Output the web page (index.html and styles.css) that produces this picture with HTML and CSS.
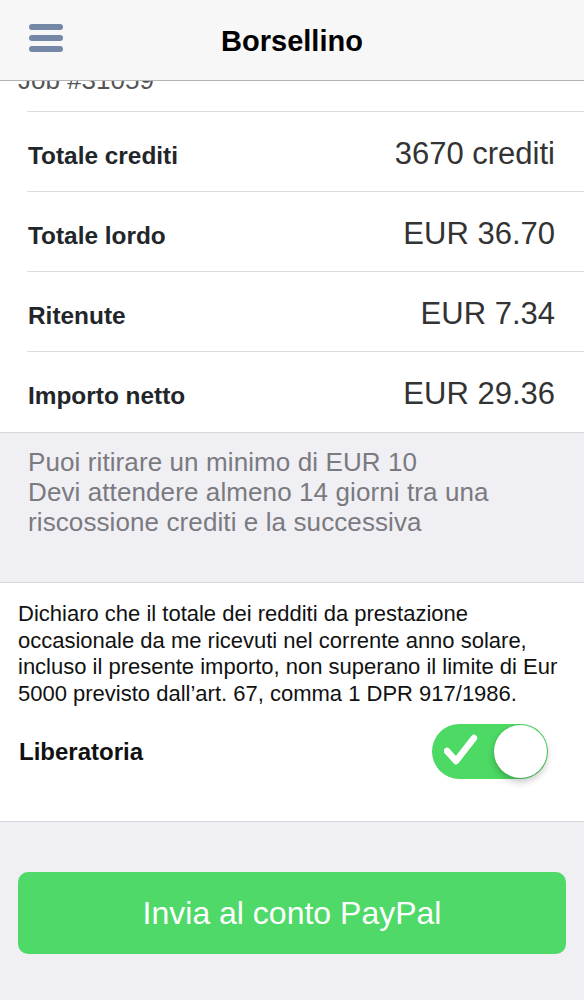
FILE: index.html
```html
<!DOCTYPE html>
<html lang="it">
<head>
<meta charset="utf-8">
<title>Borsellino</title>
<link rel="stylesheet" href="styles.css">
</head>
<body>
<header class="navbar">
  <div class="nav-left">
    <div class="hamburger"><span></span><span></span><span></span></div>
  </div>
  <h1 class="nav-title">Borsellino</h1>
  <div class="nav-right"></div>
</header>

<main class="page">
  <div class="job">Job #31059</div>

  <div class="rows">
    <div class="row"><span class="label">Totale crediti</span><span class="value">3670 crediti</span></div>
    <div class="row"><span class="label">Totale lordo</span><span class="value">EUR 36.70</span></div>
    <div class="row"><span class="label">Ritenute</span><span class="value">EUR 7.34</span></div>
    <div class="row"><span class="label">Importo netto</span><span class="value">EUR 29.36</span></div>
  </div>

  <section class="note">
    <p>Puoi ritirare un minimo di EUR 10<br>Devi attendere almeno 14 giorni tra una riscossione crediti e la successiva</p>
  </section>

  <section class="declaration">
    <p class="decl-text">Dichiaro che il totale dei redditi da prestazione occasionale da me ricevuti nel corrente anno solare, incluso il presente importo, non superano il limite di Eur 5000 previsto dall’art. 67, comma 1 DPR 917/1986.</p>
    <div class="switch-row">
      <span class="switch-label">Liberatoria</span>
      <div class="switch">
        <svg class="check" width="34" height="32" viewBox="0 0 34 32"><polyline points="3,17 12,27 30,4" fill="none" stroke="#fff" stroke-width="6.5" stroke-linecap="round" stroke-linejoin="round"/></svg>
        <span class="knob"></span>
      </div>
    </div>
  </section>

  <section class="actions">
    <button class="btn-primary">Invia al conto PayPal</button>
  </section>
</main>
</body>
</html>
```

FILE: styles.css
```css
* { box-sizing: border-box; }
html, body { margin: 0; padding: 0; }
body {
  background: #ffffff;
  font-family: "Liberation Sans", Arial, Helvetica, sans-serif;
  color: #222;
  width: 584px;
  height: 1000px;
  overflow: hidden;
  position: relative;
}

.navbar {
  position: absolute;
  top: 0; left: 0; right: 0;
  height: 81px;
  background: #f7f7f7;
  border-bottom: 1px solid #b4b4b4;
  display: grid;
  grid-template-columns: 1fr auto 1fr;
  z-index: 2;
}
.nav-left { align-self: start; padding: 24px 0 0 29px; }
.hamburger { display: flex; flex-direction: column; gap: 5px; width: 34px; }
.hamburger span { display: block; height: 6px; border-radius: 3px; background: #7487a7; }
.nav-title {
  margin: 0;
  align-self: center;
  padding-top: 3px;
  font-size: 29px;
  font-weight: 700;
  color: #000;
  line-height: 1;
}

.page { display: flex; flex-direction: column; }

.job {
  height: 111px;
  padding: 65px 0 0 18px;
  font-size: 26px;
  line-height: 30px;
  color: #555;
}

.rows { display: flex; flex-direction: column; }
.row {
  margin-left: 27px;
  height: 80px;
  border-top: 1px solid #dcdcdc;
  padding: 27px 29px 0 1px;
  display: flex;
  align-items: baseline;
  justify-content: space-between;
}
.row:last-child { height: 81px; }
.label { font-size: 24.4px; font-weight: 700; line-height: 30px; color: #22262a; }
.value { font-size: 31px; line-height: 30px; color: #333; }

.note {
  background: #efeff4;
  border-top: 1px solid #d6d6da;
  border-bottom: 1px solid #d6d6da;
  padding: 14px 28px 45px 28px;
}
.note p {
  margin: 0;
  font-size: 26px;
  letter-spacing: 0.1px;
  line-height: 30px;
  color: #7a7a7f;
}

.declaration {
  background: #fff;
  border-bottom: 1px solid #d6d6da;
  padding: 18px 10px 42px 18px;
}
.decl-text {
  margin: 0;
  font-size: 22px;
  line-height: 26.5px;
  color: #111;
}
.switch-row {
  margin-top: 17px;
  display: flex;
  align-items: center;
  justify-content: space-between;
  padding-right: 26px;
}
.switch-label { font-size: 24px; font-weight: 700; color: #111; padding-left: 1px; }
.switch {
  position: relative;
  width: 116px;
  height: 55px;
  border-radius: 28px;
  background: #4cd964;
  display: flex;
  align-items: center;
  padding-left: 12px;
}
.check { display: block; margin-top: -4px; }
.knob {
  position: absolute;
  right: 1px;
  top: 1px;
  width: 53px;
  height: 53px;
  border-radius: 50%;
  background: #fff;
  box-shadow: 0 4px 7px rgba(0,0,0,0.22), 0 0 0 1px rgba(0,0,0,0.04);
}

.actions {
  background: #efeff4;
  height: 178px;
  padding: 50px 18px 0 18px;
}
.btn-primary {
  display: block;
  width: 100%;
  height: 82px;
  border: none;
  border-radius: 10px;
  background: #4fd968;
  color: #fff;
  font-family: "Liberation Sans", Arial, sans-serif;
  font-size: 32px;
  padding: 0;
}
```
